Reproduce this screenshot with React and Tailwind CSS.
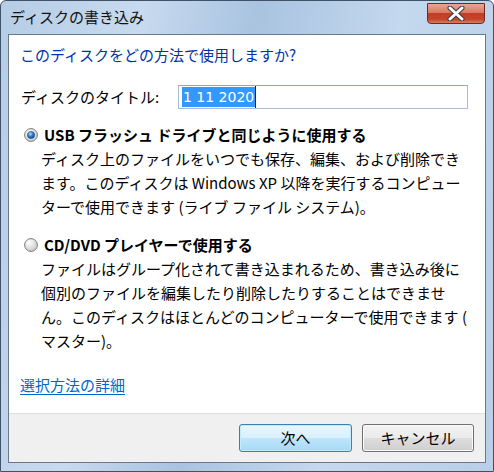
import React from "react";

const FONT = "font-['Noto_Sans_CJK_JP','Noto_Sans',sans-serif]";

function Radio({ checked }) {
  return (
    <svg width="14" height="14" viewBox="0 0 14 14" className="shrink-0">
      <defs>
        <radialGradient id={checked ? "rg-on-ring" : "rg-off-ring"} cx="0.35" cy="0.3" r="0.8">
          <stop offset="0" stopColor="#ffffff" />
          <stop offset="1" stopColor="#c4c4c4" />
        </radialGradient>
        <radialGradient id="rg-dot" cx="0.4" cy="0.35" r="0.7">
          <stop offset="0" stopColor="#b6e4fb" />
          <stop offset="0.5" stopColor="#2f7fc6" />
          <stop offset="1" stopColor="#0d3f7d" />
        </radialGradient>
      </defs>
      <circle cx="7" cy="7" r="6.4" fill={`url(#${checked ? "rg-on-ring" : "rg-off-ring"})`} stroke="#7c7c7c" strokeWidth="1" />
      {checked && <circle cx="7" cy="7" r="3.6" fill="url(#rg-dot)" stroke="#1b4f8a" strokeWidth="0.6" />}
    </svg>
  );
}

function CloseButton() {
  return (
    <div className="mt-[2px] mr-[8px] flex h-[21px] w-[58px] items-center justify-center rounded-b-[4px] border border-[#6e2a20] bg-[linear-gradient(#e9a595_0%,#d97a63_45%,#c23d24_50%,#c4462c_80%,#de7c5c_100%)]">
      <svg width="22" height="15" viewBox="0 0 22 15">
        <path d="M5 2 L17 13 M17 2 L5 13" stroke="#3b3b3b" strokeWidth="5" strokeLinecap="round" />
        <path d="M5 2 L17 13 M17 2 L5 13" stroke="#ffffff" strokeWidth="3" strokeLinecap="round" />
      </svg>
    </div>
  );
}

export default function App() {
  return (
    <div
      className={`${FONT} relative flex h-[472px] w-[494px] flex-col overflow-hidden rounded-t-[6px] border border-[#3e5269] bg-[linear-gradient(100deg,#b6cde6_0%,#c7daef_25%,#a9c3e0_45%,#c4d8ee_70%,#b8cfe8_100%)] text-[15px] text-black`}
    >
      <div className="flex h-[33px] shrink-0 items-start justify-between">
        <div className="pl-[9px] pt-[4px] text-[15px] leading-[24px] text-[#111]">ディスクの書き込み</div>
        <CloseButton />
      </div>

      <div className="mx-[7px] mb-[8px] flex flex-1 flex-col border border-[#6b7888] bg-white">
        <div className="flex flex-1 flex-col pl-[11px] pr-[17px]">
          <div className="mt-[8px] leading-[24px] text-[#0033aa]">このディスクをどの方法で使用しますか?</div>

          <div className="mt-[18px] flex items-center">
            <div className="w-[158px] pl-[1px] leading-[24px]">ディスクのタイトル:</div>
            <div className="flex h-[24px] flex-1 items-center border border-[#a9bdd3] border-t-[#8ea7c2] bg-white pl-[3px]">
              <span className="bg-[#3399ff] px-[1px] font-['DejaVu_Sans',sans-serif] text-[14px] leading-[20px] text-white">1 11 2020</span>
              <span className="h-[22px] w-[1px] bg-[#222]" />
            </div>
          </div>

          <div className="mt-[14px] flex items-center gap-[6px] pl-[4px] leading-[24px]">
            <Radio checked />
            <span className="font-bold">USB フラッシュ ドライブと同じように使用する</span>
          </div>
          <div className="pl-[21px] leading-[24px] whitespace-nowrap">
            <div>ディスク上のファイルをいつでも保存、編集、および削除でき</div>
            <div>ます。このディスクは Windows XP 以降を実行するコンピュー</div>
            <div>ターで使用できます (ライブ ファイル システム)。</div>
          </div>

          <div className="mt-[14px] flex items-center gap-[6px] pl-[4px] leading-[24px]">
            <Radio checked={false} />
            <span className="font-bold">CD/DVD プレイヤーで使用する</span>
          </div>
          <div className="pl-[21px] leading-[24px] whitespace-nowrap">
            <div>ファイルはグループ化されて書き込まれるため、書き込み後に</div>
            <div>個別のファイルを編集したり削除したりすることはできませ</div>
            <div>ん。このディスクはほとんどのコンピューターで使用できます (</div>
            <div>マスター)。</div>
          </div>

          <div className="mt-[20px] leading-[24px]">
            <span className="text-[#0066cc] underline underline-offset-[3px]">選択方法の詳細</span>
          </div>
        </div>

        <div className="flex h-[49px] shrink-0 items-start justify-end gap-[10px] border-t border-[#dfdfdf] bg-[#f0f0f0] pr-[11px] pt-[10px]">
          <button className="h-[28px] w-[113px] rounded-[3px] border border-[#3c7fb1] bg-[linear-gradient(#eaf6fd_0%,#d9f0fc_50%,#bee6fd_51%,#a7d9f5_100%)] leading-[24px] shadow-[inset_0_0_0_1px_#c0ecff]">
            次へ
          </button>
          <button className="h-[28px] w-[112px] rounded-[3px] border border-[#707070] bg-[linear-gradient(#f2f2f2_0%,#ebebeb_50%,#dddddd_51%,#cfcfcf_100%)] leading-[24px] shadow-[inset_0_0_0_1px_#fbfbfb]">
            キャンセル
          </button>
        </div>
      </div>
    </div>
  );
}
